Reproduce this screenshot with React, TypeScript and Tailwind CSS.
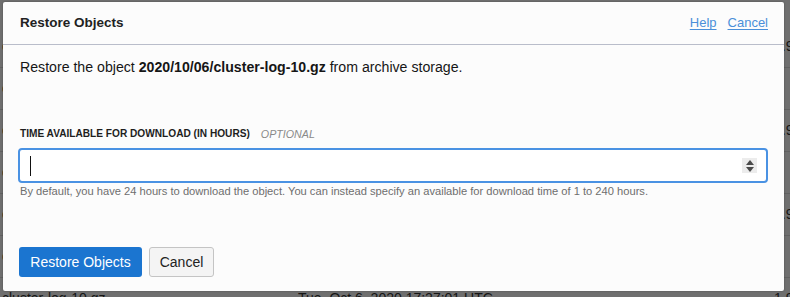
import React from "react";

const rows = [0, 1, 2, 3, 4, 5, 6];

function Spinner() {
  return (
    <div className="flex h-[15px] w-[15px] flex-col items-center justify-center gap-[2px] bg-[#ececec]">
      <svg width="8" height="5" viewBox="0 0 8 5"><path d="M4 0 L8 5 L0 5 Z" fill="#4a4a4a" /></svg>
      <svg width="8" height="5" viewBox="0 0 8 5"><path d="M0 0 L8 0 L4 5 Z" fill="#4a4a4a" /></svg>
    </div>
  );
}

export default function App() {
  return (
    <div
      className="relative h-[297px] w-[790px] overflow-hidden bg-[#6f6f6f]"
      style={{ fontFamily: '"Liberation Sans", Arial, Helvetica, sans-serif' }}
    >
      {/* dimmed page behind */}
      <div className="flex flex-col pt-[26px] text-[14px] text-[#151515]" aria-hidden="true">
        {rows.map((r) => (
          <div key={r} className="flex h-[42px] items-center border-b border-[#616161]">
            <div className="w-[298px] shrink-0 pl-[2px]">cluster-log-10.gz</div>
            <div className="w-[476px] shrink-0">Tue, Oct 6, 2020 17:27:01 UTC</div>
            <div className="shrink-0">{r % 2 ? "9" : "1.9"}</div>
          </div>
        ))}
      </div>

      {/* modal */}
      <div className="absolute left-[3px] top-[2px] flex h-[289px] w-[781px] flex-col rounded-[2px] bg-[#fcfcfc] shadow-[0_0_2px_rgba(0,0,0,0.35)]">
        <div className="flex h-[43px] shrink-0 items-center justify-between border-b border-[#b9bdca] pl-[17px] pr-[16px]">
          <div className="text-[13.5px] font-bold text-[#222]">Restore Objects</div>
          <div className="flex gap-[11px] text-[13px] text-[#4a8fd9]">
            <span className="underline underline-offset-2">Help</span>
            <span className="underline underline-offset-2">Cancel</span>
          </div>
        </div>

        <div className="flex flex-col pl-[15px] pr-[16px]">
          <div className="ml-[2px] mt-[12px] text-[14.15px] leading-[20px] text-[#161616]">
            Restore the object <span className="font-bold">2020/10/06/cluster-log-10.gz</span> from archive storage.
          </div>

          <div className="ml-[2px] mt-[50px] flex items-center gap-[11px] leading-[14px]">
            <span className="text-[10.15px] font-bold text-[#1e1e1e]">TIME AVAILABLE FOR DOWNLOAD (IN HOURS)</span>
            <span className="text-[10.7px] italic text-[#8a8a8a]">OPTIONAL</span>
          </div>

          <div className="mt-[7px] flex h-[35px] w-[750px] items-center justify-between rounded-[4px] border-2 border-[#4a92e3] bg-white pl-[10px] pr-[9px]">
            <div className="h-[20px] w-[1px] bg-[#111]" />
            <Spinner />
          </div>

          <div className="ml-[2px] mt-[1px] text-[11.15px] leading-[14px] text-[#6e6e6e]">
            By default, you have 24 hours to download the object. You can instead specify an available for download time of 1 to 240 hours.
          </div>

          <div className="ml-[1px] mt-[49px] flex gap-[7px]">
            <button className="h-[30px] w-[123px] rounded-[3px] bg-[#1b75d0] text-[14px] text-white">
              Restore Objects
            </button>
            <button className="h-[30px] w-[65px] rounded-[3px] border border-[#c4c4c4] bg-[#f4f4f4] text-[14px] text-[#222]">
              Cancel
            </button>
          </div>
        </div>
      </div>
    </div>
  );
}
